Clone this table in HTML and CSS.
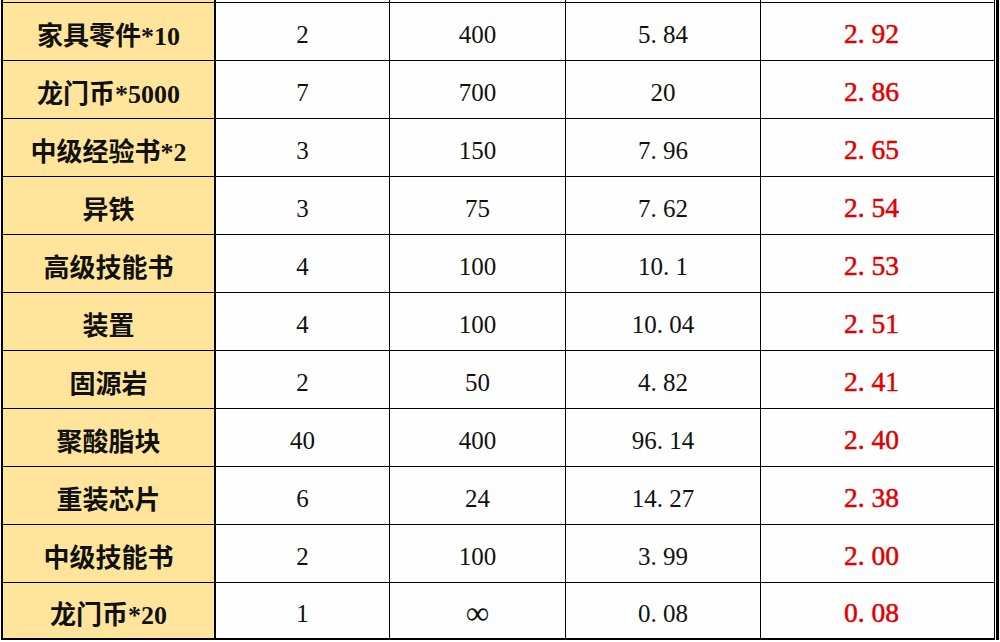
FILE: index.html
```html
<!DOCTYPE html>
<html lang="zh-CN">
<head>
<meta charset="utf-8">
<title>材料性价比表</title>
<link rel="stylesheet" href="styles.css">
</head>
<body>
<div class="sheet">
  <div class="c name cut"></div><div class="c cut"></div><div class="c cut"></div><div class="c cut"></div><div class="c cut"></div>

  <div class="c name">家具零件*10</div><div class="c num">2</div><div class="c num">400</div><div class="c num">5<span class="p">.</span>84</div><div class="c num red">2<span class="p">.</span>92</div>
  <div class="c name">龙门币*5000</div><div class="c num">7</div><div class="c num">700</div><div class="c num">20</div><div class="c num red">2<span class="p">.</span>86</div>
  <div class="c name">中级经验书*2</div><div class="c num">3</div><div class="c num">150</div><div class="c num">7<span class="p">.</span>96</div><div class="c num red">2<span class="p">.</span>65</div>
  <div class="c name">异铁</div><div class="c num">3</div><div class="c num">75</div><div class="c num">7<span class="p">.</span>62</div><div class="c num red">2<span class="p">.</span>54</div>
  <div class="c name">高级技能书</div><div class="c num">4</div><div class="c num">100</div><div class="c num">10<span class="p">.</span>1</div><div class="c num red">2<span class="p">.</span>53</div>
  <div class="c name">装置</div><div class="c num">4</div><div class="c num">100</div><div class="c num">10<span class="p">.</span>04</div><div class="c num red">2<span class="p">.</span>51</div>
  <div class="c name">固源岩</div><div class="c num">2</div><div class="c num">50</div><div class="c num">4<span class="p">.</span>82</div><div class="c num red">2<span class="p">.</span>41</div>
  <div class="c name">聚酸脂块</div><div class="c num">40</div><div class="c num">400</div><div class="c num">96<span class="p">.</span>14</div><div class="c num red">2<span class="p">.</span>40</div>
  <div class="c name">重装芯片</div><div class="c num">6</div><div class="c num">24</div><div class="c num">14<span class="p">.</span>27</div><div class="c num red">2<span class="p">.</span>38</div>
  <div class="c name">中级技能书</div><div class="c num">2</div><div class="c num">100</div><div class="c num">3<span class="p">.</span>99</div><div class="c num red">2<span class="p">.</span>00</div>
  <div class="c name last">龙门币*20</div><div class="c num last">1</div><div class="c num last"><span class="inf">∞</span></div><div class="c num last">0<span class="p">.</span>08</div><div class="c num red last">0<span class="p">.</span>08</div>
</div>
</body>
</html>
```

FILE: styles.css
```css
html, body {
  margin: 0;
  padding: 0;
  background: #ffffff;
}

.sheet {
  display: grid;
  grid-template-columns: 215px 174px 176px 195px 234px;
  grid-template-rows: 3px repeat(10, 58px) 57px;
  width: fit-content;
  margin-left: 1px;
  padding-right: 1px;
  border-right: 3px solid #000;
  font-family: "Liberation Serif", "Noto Sans CJK SC", serif;
  color: #111;
}

.c {
  box-sizing: border-box;
  display: flex;
  align-items: center;
  justify-content: center;
  border-right: 1px solid #000;
  border-bottom: 1px solid #000;
  background: #fefefe;
  white-space: nowrap;
}

.name {
  background: #ffe59b;
  border-left: 2px solid #000;
  border-right: 2px solid #000;
  font-size: 26px;
  font-weight: 700;
  padding-top: 4px;
  color: #111;
}

.num {
  font-size: 25px;
  padding-top: 6px;
}

.p {
  letter-spacing: 0.25em;
}

.inf {
  font-size: 33px;
  line-height: 1;
}

.red {
  color: #e00000;
  font-size: 27.5px;
  padding-top: 4px;
  padding-right: 12px;
  -webkit-text-stroke: 0.5px #e00000;
}

.cut {
  padding: 0;
}

.last {
  border-bottom-width: 2px;
}
```
